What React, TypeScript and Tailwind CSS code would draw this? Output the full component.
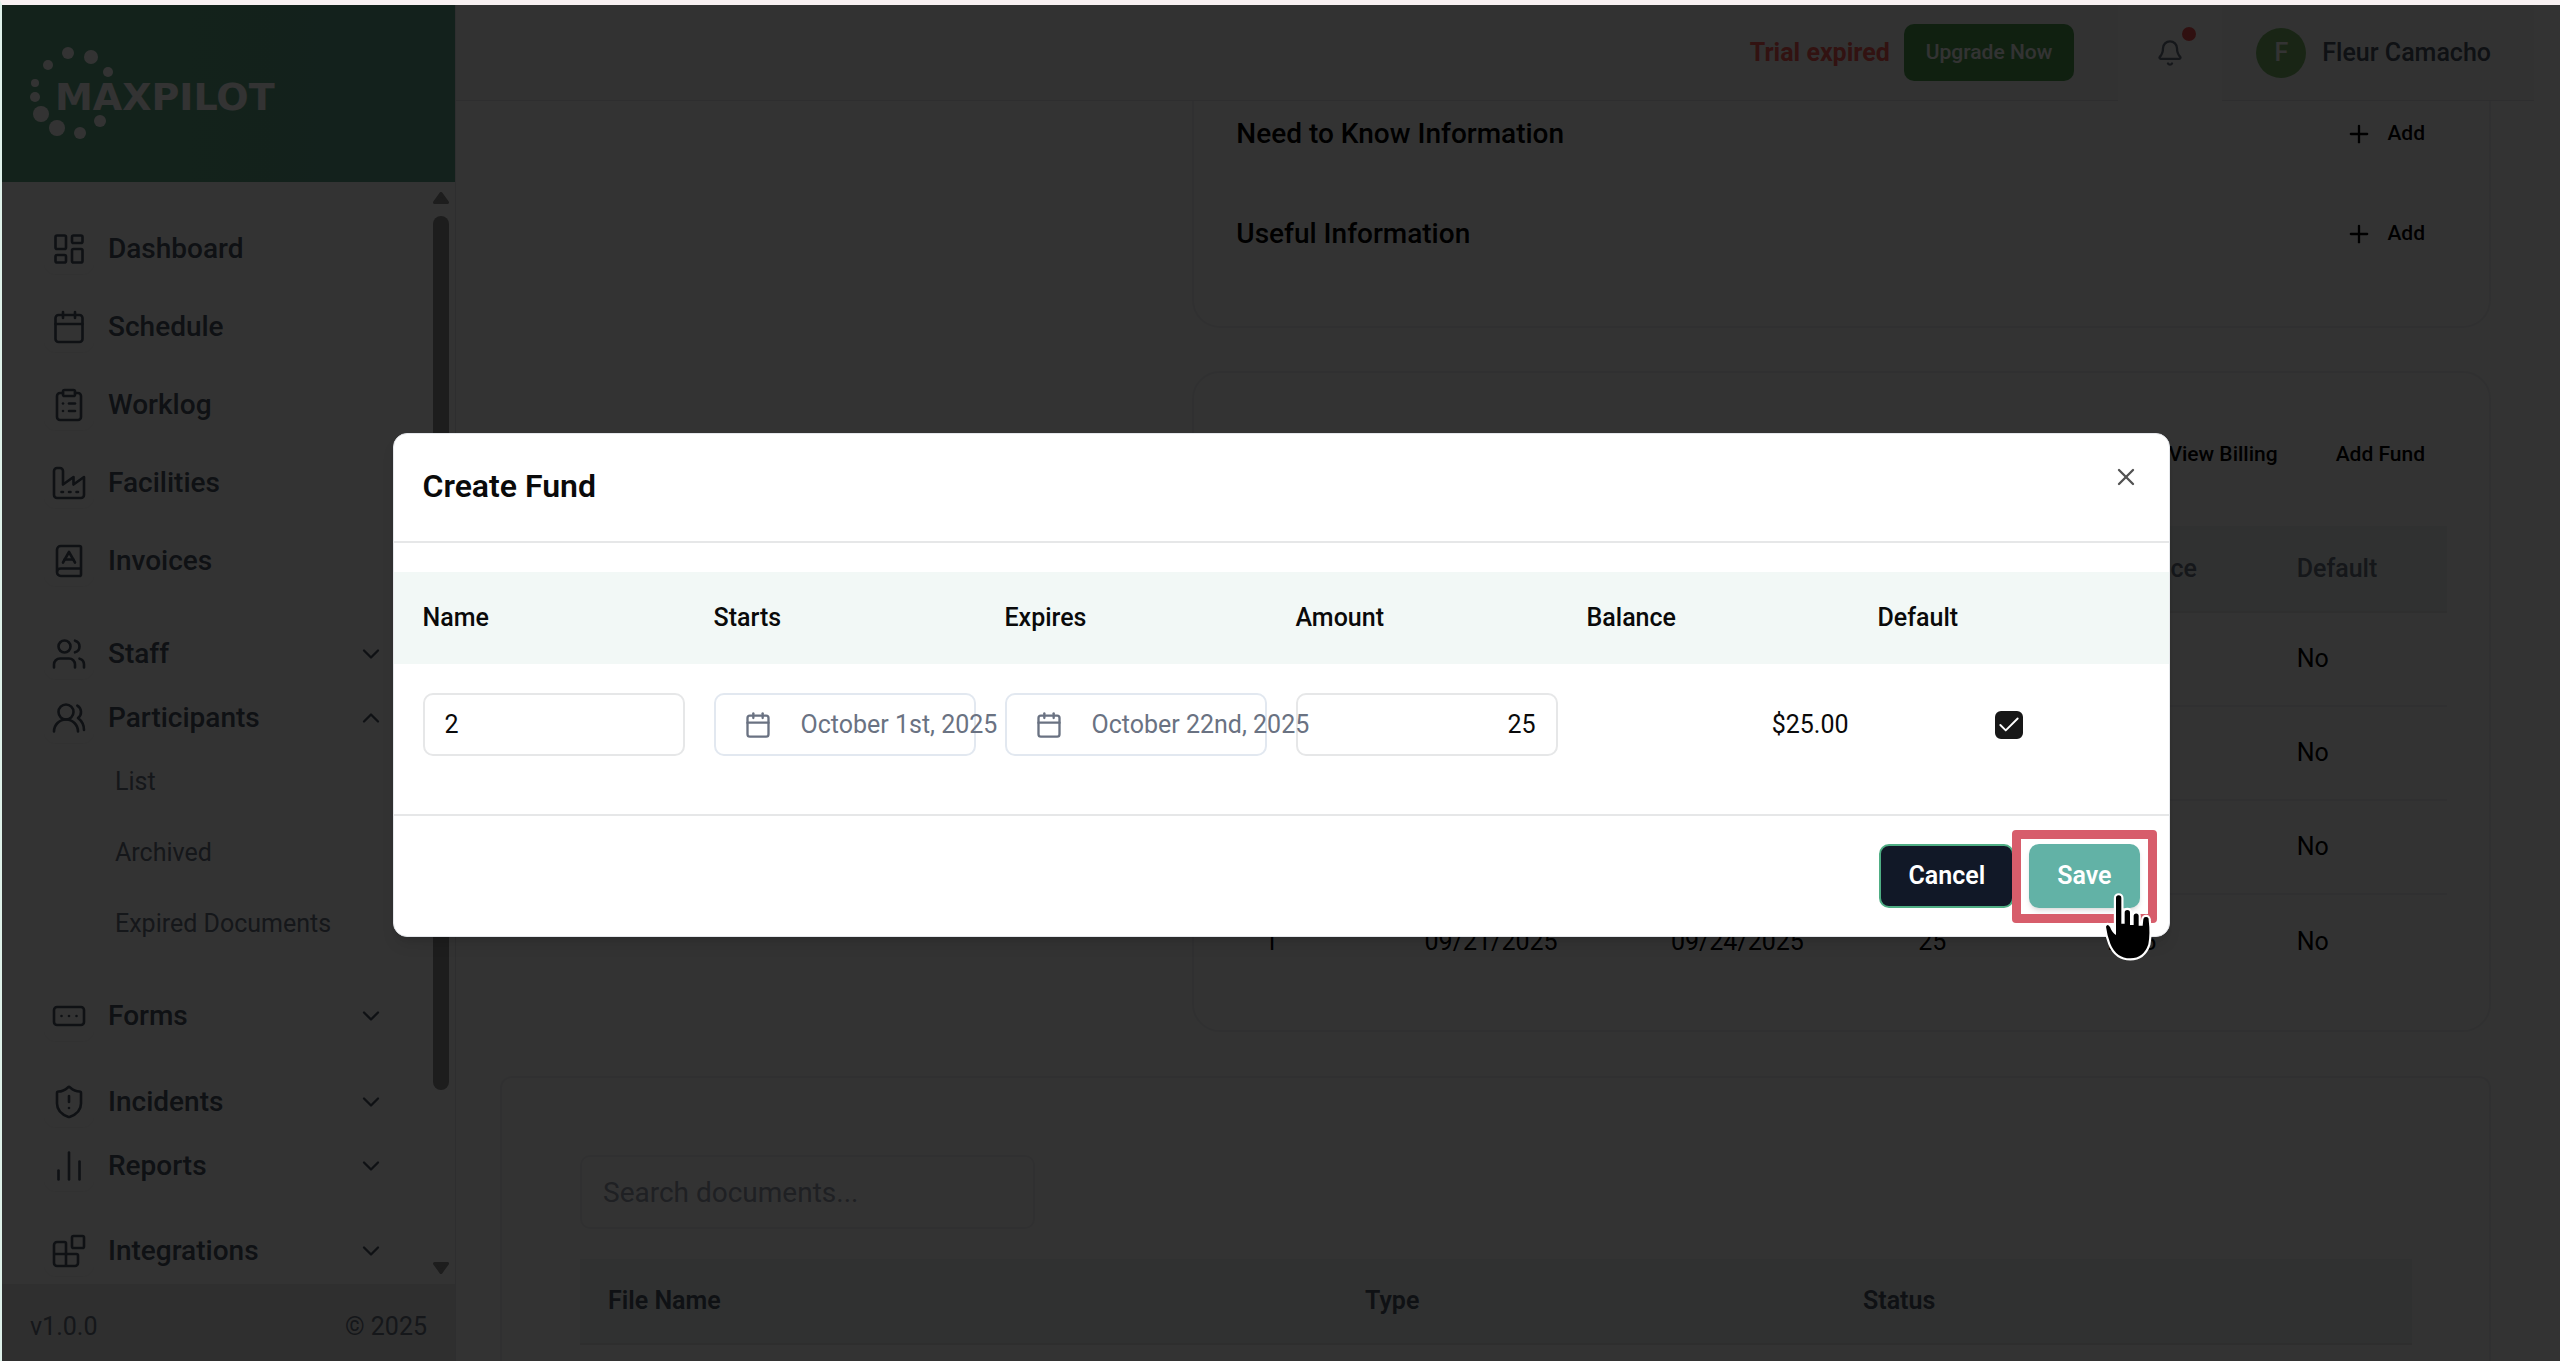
import type { ReactNode } from "react";
import {
  Bell,
  Blocks,
  BookA,
  Calendar,
  ChartNoAxesColumn,
  Check,
  ChevronDown,
  ChevronUp,
  ClipboardList,
  LayoutDashboard,
  Plus,
  RectangleEllipsis,
  ShieldAlert,
  Users,
  UsersRound,
  X,
} from "lucide-react";

const iconProps = { size: 36, strokeWidth: 1.75 };

function FactoryIcon() {
  return (
    <svg width="36" height="36" viewBox="0 0 24 24" fill="none" stroke="currentColor" strokeWidth="1.75" strokeLinecap="round" strokeLinejoin="round" aria-hidden="true">
      <path d="M2 20a2 2 0 0 0 2 2h16a2 2 0 0 0 2-2V8l-7 5V8l-7 5V4a2 2 0 0 0-2-2H4a2 2 0 0 0-2 2Z" />
      <path d="M17 18h1M12 18h1M7 18h1" />
    </svg>
  );
}

function Logo() {
  const dots = [
    [68, 53, 6],
    [91, 57, 7],
    [48, 65, 5],
    [108, 72, 5],
    [35, 83, 4],
    [35, 97, 5],
    [41, 114, 8],
    [57, 128, 8],
    [80, 133, 6],
    [100, 121, 6],
  ];
  return (
    <svg width="290" height="177" viewBox="2 5 290 177" role="img" aria-label="MaxPilot" className="block">
      {dots.map(([x, y, r]) => (
        <circle key={`${x}-${y}`} cx={x} cy={y} r={r} fill="#fff" />
      ))}
      <text x="55" y="110" fill="#fff" fontSize="38" className="font-['DejaVu_Sans'] font-bold">
        MAXPILOT
      </text>
    </svg>
  );
}

function NavItem({ icon, label, open }: { icon: ReactNode; label: string; open?: boolean }) {
  const body = (
    <>
      <span className="flex size-[50px] items-center justify-center rounded-xl shadow-xs">{icon}</span>
      <span className="flex-1 text-left">{label}</span>
      {open === true && <ChevronUp size={28} />}
      {open === false && <ChevronDown size={28} />}
    </>
  );
  const cls = "flex h-16 w-full items-center gap-3.5 pl-[42px] pr-12 text-[28px] font-medium text-gray-600";
  return open === undefined ? (
    <a href="#" className={cls}>
      {body}
    </a>
  ) : (
    <button type="button" aria-expanded={open} className={cls}>
      {body}
    </button>
  );
}

function Sidebar() {
  return (
    <aside className="flex w-[454px] shrink-0 flex-col border-r border-gray-200 bg-white">
      <div className="h-[177px] shrink-0 bg-linear-to-r from-[#62aa85] to-[#62a58c]">
        <Logo />
      </div>
      <div className="flex min-h-0 flex-1">
        <nav className="flex-1 overflow-hidden pt-[35px]">
          <div className="flex flex-col gap-3.5">
            <NavItem icon={<LayoutDashboard {...iconProps} />} label="Dashboard" />
            <NavItem icon={<Calendar {...iconProps} />} label="Schedule" />
            <NavItem icon={<ClipboardList {...iconProps} />} label="Worklog" />
            <NavItem icon={<FactoryIcon />} label="Facilities" />
            <NavItem icon={<BookA {...iconProps} />} label="Invoices" />
          </div>
          <div className="mt-[29px]">
            <NavItem icon={<Users {...iconProps} />} label="Staff" open={false} />
            <NavItem icon={<UsersRound {...iconProps} />} label="Participants" open />
            <div className="flex flex-col gap-[7px] pl-[113px] text-[25px] text-gray-500">
              <a href="#" className="flex h-16 items-center">List</a>
              <a href="#" className="flex h-16 items-center">Archived</a>
              <a href="#" className="flex h-16 items-center">Expired Documents</a>
            </div>
          </div>
          <div className="mt-7">
            <NavItem icon={<RectangleEllipsis {...iconProps} />} label="Forms" open={false} />
          </div>
          <div className="mt-[22px]">
            <NavItem icon={<ShieldAlert {...iconProps} />} label="Incidents" open={false} />
            <NavItem icon={<ChartNoAxesColumn {...iconProps} />} label="Reports" open={false} />
          </div>
          <div className="mt-[21px]">
            <NavItem icon={<Blocks {...iconProps} />} label="Integrations" open={false} />
          </div>
        </nav>
        <div className="mr-1.5 flex w-4 flex-col items-center py-2.5 text-[#8f8f8f]">
          <svg width="16" height="12" viewBox="0 0 16 12" aria-hidden="true">
            <path d="M8 1.5 14.5 10.5H1.5Z" fill="currentColor" stroke="currentColor" strokeWidth="3" strokeLinejoin="round" />
          </svg>
          <div className="mt-3 w-full flex-[876] rounded-full bg-current" />
          <div className="flex-[172]" />
          <svg width="16" height="12" viewBox="0 0 16 12" aria-hidden="true">
            <path d="M8 10.5 14.5 1.5H1.5Z" fill="currentColor" stroke="currentColor" strokeWidth="3" strokeLinejoin="round" />
          </svg>
        </div>
      </div>
      <footer className="flex h-[77px] shrink-0 items-center justify-between bg-[#eaebeb] pb-2 pl-7 pr-7 pt-4 text-[25px] text-gray-500">
        <span>v1.0.0</span>
        <span>© 2025</span>
      </footer>
    </aside>
  );
}

function TopBar() {
  return (
    <header className="flex h-24 shrink-0 items-center justify-end border-b border-gray-200 bg-[#f8f9f9] pr-[43px]">
      <span className="mr-3.5 text-[25px] font-bold text-[#f95a55]">Trial expired</span>
      <button type="button" className="h-[57px] rounded-[10px] bg-[#50a052] px-[22px] text-[21px] font-medium text-white">
        Upgrade Now
      </button>
      <div className="-mb-px ml-11 mr-[34px] flex self-stretch bg-white px-[38px]">
        <button type="button" aria-label="Notifications" className="relative self-center text-gray-500">
          <Bell size={28} />
          <span className="absolute -right-3 -top-3 size-3.5 rounded-full bg-[#f05050]" />
        </button>
      </div>
      <button type="button" className="flex items-center gap-4 text-[25px] font-medium text-gray-600">
        <span className="flex size-[50px] items-center justify-center rounded-full bg-[#7cba6a] text-white">F</span>
        Fleur Camacho
      </button>
    </header>
  );
}

function InfoRow({ title }: { title: string }) {
  return (
    <div className="flex h-[66px] items-center justify-between">
      <h2 className="text-[28px] font-medium">{title}</h2>
      <button type="button" className="flex items-center gap-3.5 px-[22px] text-[21px] font-medium">
        <Plus size={28} />
        Add
      </button>
    </div>
  );
}

const funds = [
  ["", "", "", "", "", "No"],
  ["", "", "", "", "", "No"],
  ["", "", "", "", "", "No"],
  ["1", "09/21/2025", "09/24/2025", "25", "25.5", "No"],
];

const fundColumns = [
  ["Name", "w-[160px]"],
  ["Starts", "w-[246px]"],
  ["Expires", "w-[247px]"],
  ["Amount", "w-[189px]"],
  ["Balance", "w-[189px]"],
  ["Default", "w-[178px]"],
];

function Content() {
  return (
    <main className="flex min-h-0 flex-1 flex-col gap-11 overflow-hidden bg-[#fcfdfd] pl-11 pr-[43px]">
      <div className="grid grid-cols-[1fr_2fr] gap-[43px]">
        <div className="col-start-2 flex flex-col gap-[43px]">
          <section className="flex flex-col gap-[34px] rounded-b-[28px] border-x-2 border-b-2 border-[#f0f1f2] bg-white px-[42px] pb-[59px]">
            <InfoRow title="Need to Know Information" />
            <InfoRow title="Useful Information" />
          </section>
          <section className="rounded-[28px] border-2 border-[#f0f1f2] bg-white px-[42px] pb-[42px] pt-[53px]">
            <div className="flex justify-end gap-3.5 text-[21px] font-medium">
              <button type="button" className="h-[57px] px-[22px]">View Billing</button>
              <button type="button" className="h-[57px] px-[22px]">Add Fund</button>
            </div>
            <table className="mt-[43px] w-full table-fixed text-left text-[25px]">
              <thead>
                <tr className="h-[86px] border-b-2 border-[#ebecec] bg-[#f0f5f4] text-gray-500">
                  {fundColumns.map(([name, width]) => (
                    <th key={name} scope="col" className={`${width} pl-7 font-medium`}>
                      {name}
                    </th>
                  ))}
                </tr>
              </thead>
              <tbody>
                {funds.map((row, i) => (
                  <tr key={i} className="h-[94px] border-b-2 border-[#f0f1f2] last:border-b-0">
                    {row.map((cell, j) => (
                      <td key={j} className="pl-7">
                        {cell}
                      </td>
                    ))}
                  </tr>
                ))}
              </tbody>
            </table>
          </section>
        </div>
      </div>
      <section className="flex-1 rounded-t-xl border-x-2 border-t-2 border-[#f0f1f2] bg-white px-[78px] pt-[77px]">
        <input
          type="search"
          aria-label="Search documents"
          placeholder="Search documents..."
          className="block h-[74px] w-[455px] rounded-[10px] border-2 border-[#f0f1f2] px-[21px] text-[28px] placeholder:text-gray-400"
        />
        <table className="mt-[30px] w-full table-fixed text-left text-[25px]">
          <thead>
            <tr className="h-[85px] border-b-2 border-[#e6e7e7] bg-[#eff3f2] text-gray-600">
              <th scope="col" className="w-[757px] pl-7 font-semibold">File Name</th>
              <th scope="col" className="w-[498px] pl-7 font-semibold">Type</th>
              <th scope="col" className="w-[577px] pl-7 font-semibold">Status</th>
            </tr>
          </thead>
        </table>
      </section>
    </main>
  );
}

function HandCursor() {
  return (
    <svg width="50" height="72" viewBox="100 30 150 216" className="absolute left-[74px] top-[47px]" aria-hidden="true">
      <path
        d="M139 162V51a8 8 0 0 1 16 0V128H165V95a8 8 0 0 1 16 0V132H192V105a7.5 7.5 0 0 1 15 0V134H219L221 115a8 8 0 0 1 16 2Q242 158 236 190Q222 232 182 232Q140 232 122 188Q112 162 109 137Q113 126 121 138Q128 156 139 162Z"
        fill="#000"
        stroke="#fff"
        strokeWidth="13"
        strokeLinejoin="round"
        className="[paint-order:stroke]"
      />
    </svg>
  );
}

function DateButton({ label, children }: { label: string; children: string }) {
  return (
    <button
      type="button"
      aria-label={`${label}: ${children}`}
      className="flex h-[63px] w-full items-center gap-[29px] whitespace-nowrap rounded-[10px] border-2 border-slate-200 pl-7 text-gray-500"
    >
      <Calendar size={28} className="shrink-0" />
      {children}
    </button>
  );
}

function CreateFundDialog() {
  const inputCls = "block h-[63px] w-full rounded-[10px] border-2 border-[#e6e7e8] bg-transparent px-5";
  return (
    <div
      role="dialog"
      aria-modal="true"
      aria-labelledby="dialog-title"
      className="relative w-full max-w-[1777px] rounded-[14px] border border-gray-200 bg-white text-[25px] text-neutral-950 shadow-lg"
    >
      <div className="flex h-[109px] items-center border-b-2 border-[#e6e7e8] px-[29px] pb-1">
        <h1 id="dialog-title" className="text-[32px] font-semibold">Create Fund</h1>
      </div>
      <button type="button" aria-label="Close" className="absolute right-[29px] top-[29px] text-neutral-600">
        <X size={28} />
      </button>
      <table className="mb-[29px] mt-[29px] w-full table-fixed text-left">
        <thead>
          <tr className="h-[92px] bg-[#f2f8f6]">
            {["Name", "Starts", "Expires", "Amount", "Balance", "Default"].map((h) => (
              <th key={h} scope="col" className="pl-[29px] font-medium">
                {h}
              </th>
            ))}
            <td className="w-[29px]" />
          </tr>
        </thead>
        <tbody>
          <tr className="h-[121px]">
            <td className="pl-[29px]">
              <input aria-label="Name" defaultValue="2" className={inputCls} />
            </td>
            <td className="pl-[29px]">
              <DateButton label="Starts">October 1st, 2025</DateButton>
            </td>
            <td className="pl-[29px]">
              <DateButton label="Expires">October 22nd, 2025</DateButton>
            </td>
            <td className="pl-[29px]">
              <input aria-label="Amount" inputMode="decimal" defaultValue="25" className={`${inputCls} text-right`} />
            </td>
            <td className="pl-[29px] text-right">$25.00</td>
            <td className="pl-[29px]">
              <label className="relative mx-auto flex size-7">
                <input
                  type="checkbox"
                  aria-label="Default"
                  defaultChecked
                  className="peer size-7 appearance-none rounded-md border-2 border-neutral-900 checked:bg-neutral-900"
                />
                <Check size={26} strokeWidth={1.75} className="absolute left-px top-px hidden text-white peer-checked:block" />
              </label>
            </td>
            <td />
          </tr>
        </tbody>
      </table>
      <div className="flex justify-end gap-[15px] border-t-2 border-[#e6e7e8] px-[29px] py-7 font-semibold">
        <button type="button" className="h-16 rounded-[10px] border-2 border-[#4fae84] bg-[#111827] px-[27px] text-white">
          Cancel
        </button>
        <div className="relative">
          <button type="button" className="h-16 rounded-[10px] bg-[#62b2a6] px-7 text-white shadow-md">
            Save
          </button>
          <div className="pointer-events-none absolute -bottom-[15px] -left-[17px] -right-[17px] -top-[14px] rounded border-[9px] border-[#d75d6b]" />
          <HandCursor />
        </div>
      </div>
    </div>
  );
}

export default function App() {
  return (
    <div className="h-screen overflow-hidden border-l-2 border-t-[5px] border-l-[#dff1ea] border-t-[#f8f1f2] bg-white font-[Roboto,sans-serif] text-black">
      <div className="relative flex h-full">
        <Sidebar />
        <div className="flex min-w-0 flex-1 bg-white pr-[26px]">
          <div className="flex min-w-0 flex-1 flex-col">
            <TopBar />
            <Content />
          </div>
        </div>
        <div className="absolute inset-0 flex items-center justify-center bg-black/80 pt-1">
          <CreateFundDialog />
        </div>
      </div>
    </div>
  );
}
